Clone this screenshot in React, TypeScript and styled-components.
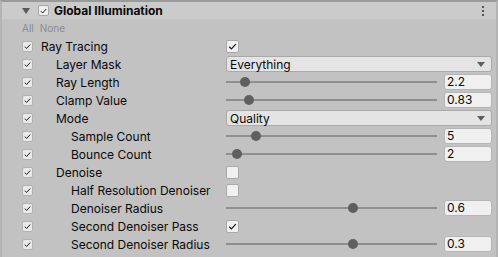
import React from 'react';
import styled, { createGlobalStyle } from 'styled-components';

const GlobalStyle = createGlobalStyle`
body {
  margin: 0;
  background: #c2c2c2;
  font-family: Inter, "Noto Sans", sans-serif;
  color: #090909;
}
`;

type Item =
  | { kind: 'toggle'; label: string; indent: number; on: boolean }
  | { kind: 'dropdown'; label: string; indent: number; value: string }
  | { kind: 'slider'; label: string; indent: number; pos: number; value: string };

const items: Item[] = [
  { kind: 'toggle', label: 'Ray Tracing', indent: 0, on: true },
  { kind: 'dropdown', label: 'Layer Mask', indent: 1, value: 'Everything' },
  { kind: 'slider', label: 'Ray Length', indent: 1, pos: 0.09, value: '2.2' },
  { kind: 'slider', label: 'Clamp Value', indent: 1, pos: 0.11, value: '0.83' },
  { kind: 'dropdown', label: 'Mode', indent: 1, value: 'Quality' },
  { kind: 'slider', label: 'Sample Count', indent: 2, pos: 0.14, value: '5' },
  { kind: 'slider', label: 'Bounce Count', indent: 2, pos: 0.05, value: '2' },
  { kind: 'toggle', label: 'Denoise', indent: 1, on: false },
  { kind: 'toggle', label: 'Half Resolution Denoiser', indent: 2, on: false },
  { kind: 'slider', label: 'Denoiser Radius', indent: 2, pos: 0.6, value: '0.6' },
  { kind: 'toggle', label: 'Second Denoiser Pass', indent: 2, on: true },
  { kind: 'slider', label: 'Second Denoiser Radius', indent: 2, pos: 0.6, value: '0.3' },
];

const Check = ({ size }: { size: number }) => (
  <svg width={size} height={size} viewBox="0 0 10 10">
    <path d="M2 5.2 L4 7.2 L8 2.8" fill="none" stroke="#1a1a1a" strokeWidth="1.1" />
  </svg>
);

const App: React.FC = () => (
  <>
    <GlobalStyle />
    <Panel>
      <Header>
        <Foldout viewBox="0 0 8 8" width="8" height="8">
          <path d="M0 1 L8 1 L4 7 Z" fill="#5a5a5a" />
        </Foldout>
        <HeaderBox>
          <Check size={10} />
        </HeaderBox>
        <Title>Global Illumination</Title>
        <Dots>
          <span />
          <span />
          <span />
        </Dots>
      </Header>
      <AllNone>
        <span>All</span>
        <span>None</span>
      </AllNone>
      <Rows>
        {items.map(item => (
          <Row key={item.label}>
            <OverrideBox>
              <Check size={9} />
            </OverrideBox>
            <Label indent={item.indent}>{item.label}</Label>
            <Value>
              {item.kind === 'toggle' && (
                <ValueBox>{item.on && <Check size={11} />}</ValueBox>
              )}
              {item.kind === 'dropdown' && (
                <Dropdown>
                  <span>{item.value}</span>
                  <svg width="8" height="5" viewBox="0 0 8 5">
                    <path d="M0 0 L8 0 L4 5 Z" fill="#5e5e5e" />
                  </svg>
                </Dropdown>
              )}
              {item.kind === 'slider' && (
                <>
                  <Track>
                    <Thumb style={{ left: `${item.pos * 100}%` }} />
                  </Track>
                  <NumberField>{item.value}</NumberField>
                </>
              )}
            </Value>
          </Row>
        ))}
      </Rows>
    </Panel>
  </>
);

const Panel = styled.div`
width: 498px;
height: 257px;
box-sizing: border-box;
border-top: 2px solid #9a9a9a;
border-left: 2px solid #b4b4b4;
border-right: 2px solid #b4b4b4;
background: #c2c2c2;
overflow: hidden;
`;

const Header = styled.div`
height: 17px;
background: #cbcbcb;
display: flex;
align-items: center;
padding-left: 20px;
`;

const Foldout = styled.svg`
margin-right: 8px;
`;

const HeaderBox = styled.div`
width: 11px;
height: 11px;
box-sizing: border-box;
border: 1px solid #a6a6a6;
border-radius: 2px;
background: #efefef;
display: flex;
align-items: center;
justify-content: center;
`;

const Title = styled.div`
margin-left: 5px;
font-size: 12px;
font-weight: 700;
flex: 1;
`;

const Dots = styled.div`
display: flex;
flex-direction: column;
gap: 2px;
margin-right: 12px;
span {
  width: 2px;
  height: 2px;
  background: #555;
}
`;

const AllNone = styled.div`
height: 17px;
display: flex;
align-items: center;
gap: 6px;
padding-left: 20px;
font-size: 10px;
color: #8c8c8c;
`;

const Rows = styled.div`
display: flex;
flex-direction: column;
padding-top: 1px;
`;

const Row = styled.div`
height: 18px;
display: flex;
align-items: center;
padding-left: 20px;
padding-right: 4px;
`;

const OverrideBox = styled.div`
width: 11px;
height: 11px;
box-sizing: border-box;
border-radius: 2px;
background: #e9e9e9;
border: 1px solid #b2b2b2;
display: flex;
align-items: center;
justify-content: center;
`;

const Label = styled.div<{ indent: number }>`
width: 193px;
box-sizing: border-box;
padding-left: ${p => 8 + p.indent * 15}px;
font-size: 12px;
white-space: nowrap;
`;

const Value = styled.div`
flex: 1;
display: flex;
align-items: center;
gap: 7px;
`;

const ValueBox = styled.div`
width: 13px;
height: 13px;
box-sizing: border-box;
border: 1px solid #a9a9a9;
border-radius: 2px;
background: #f0f0f0;
display: flex;
align-items: center;
justify-content: center;
`;

const Dropdown = styled.div`
flex: 1;
height: 16px;
box-sizing: border-box;
border: 1px solid #a9a9a9;
border-radius: 3px;
background: #e4e4e4;
display: flex;
align-items: center;
justify-content: space-between;
padding: 0 6px 0 3px;
font-size: 12px;
`;

const Track = styled.div`
flex: 1;
height: 2px;
background: #8f8f8f;
position: relative;
`;

const Thumb = styled.div`
position: absolute;
top: -4px;
width: 10px;
height: 10px;
margin-left: -5px;
border-radius: 50%;
background: #5f5f5f;
`;

const NumberField = styled.div`
width: 48px;
height: 16px;
box-sizing: border-box;
border: 1px solid #b5b5b5;
border-radius: 3px;
background: #f0f0f0;
font-size: 12px;
line-height: 14px;
padding-left: 2px;
`;

export default App;
